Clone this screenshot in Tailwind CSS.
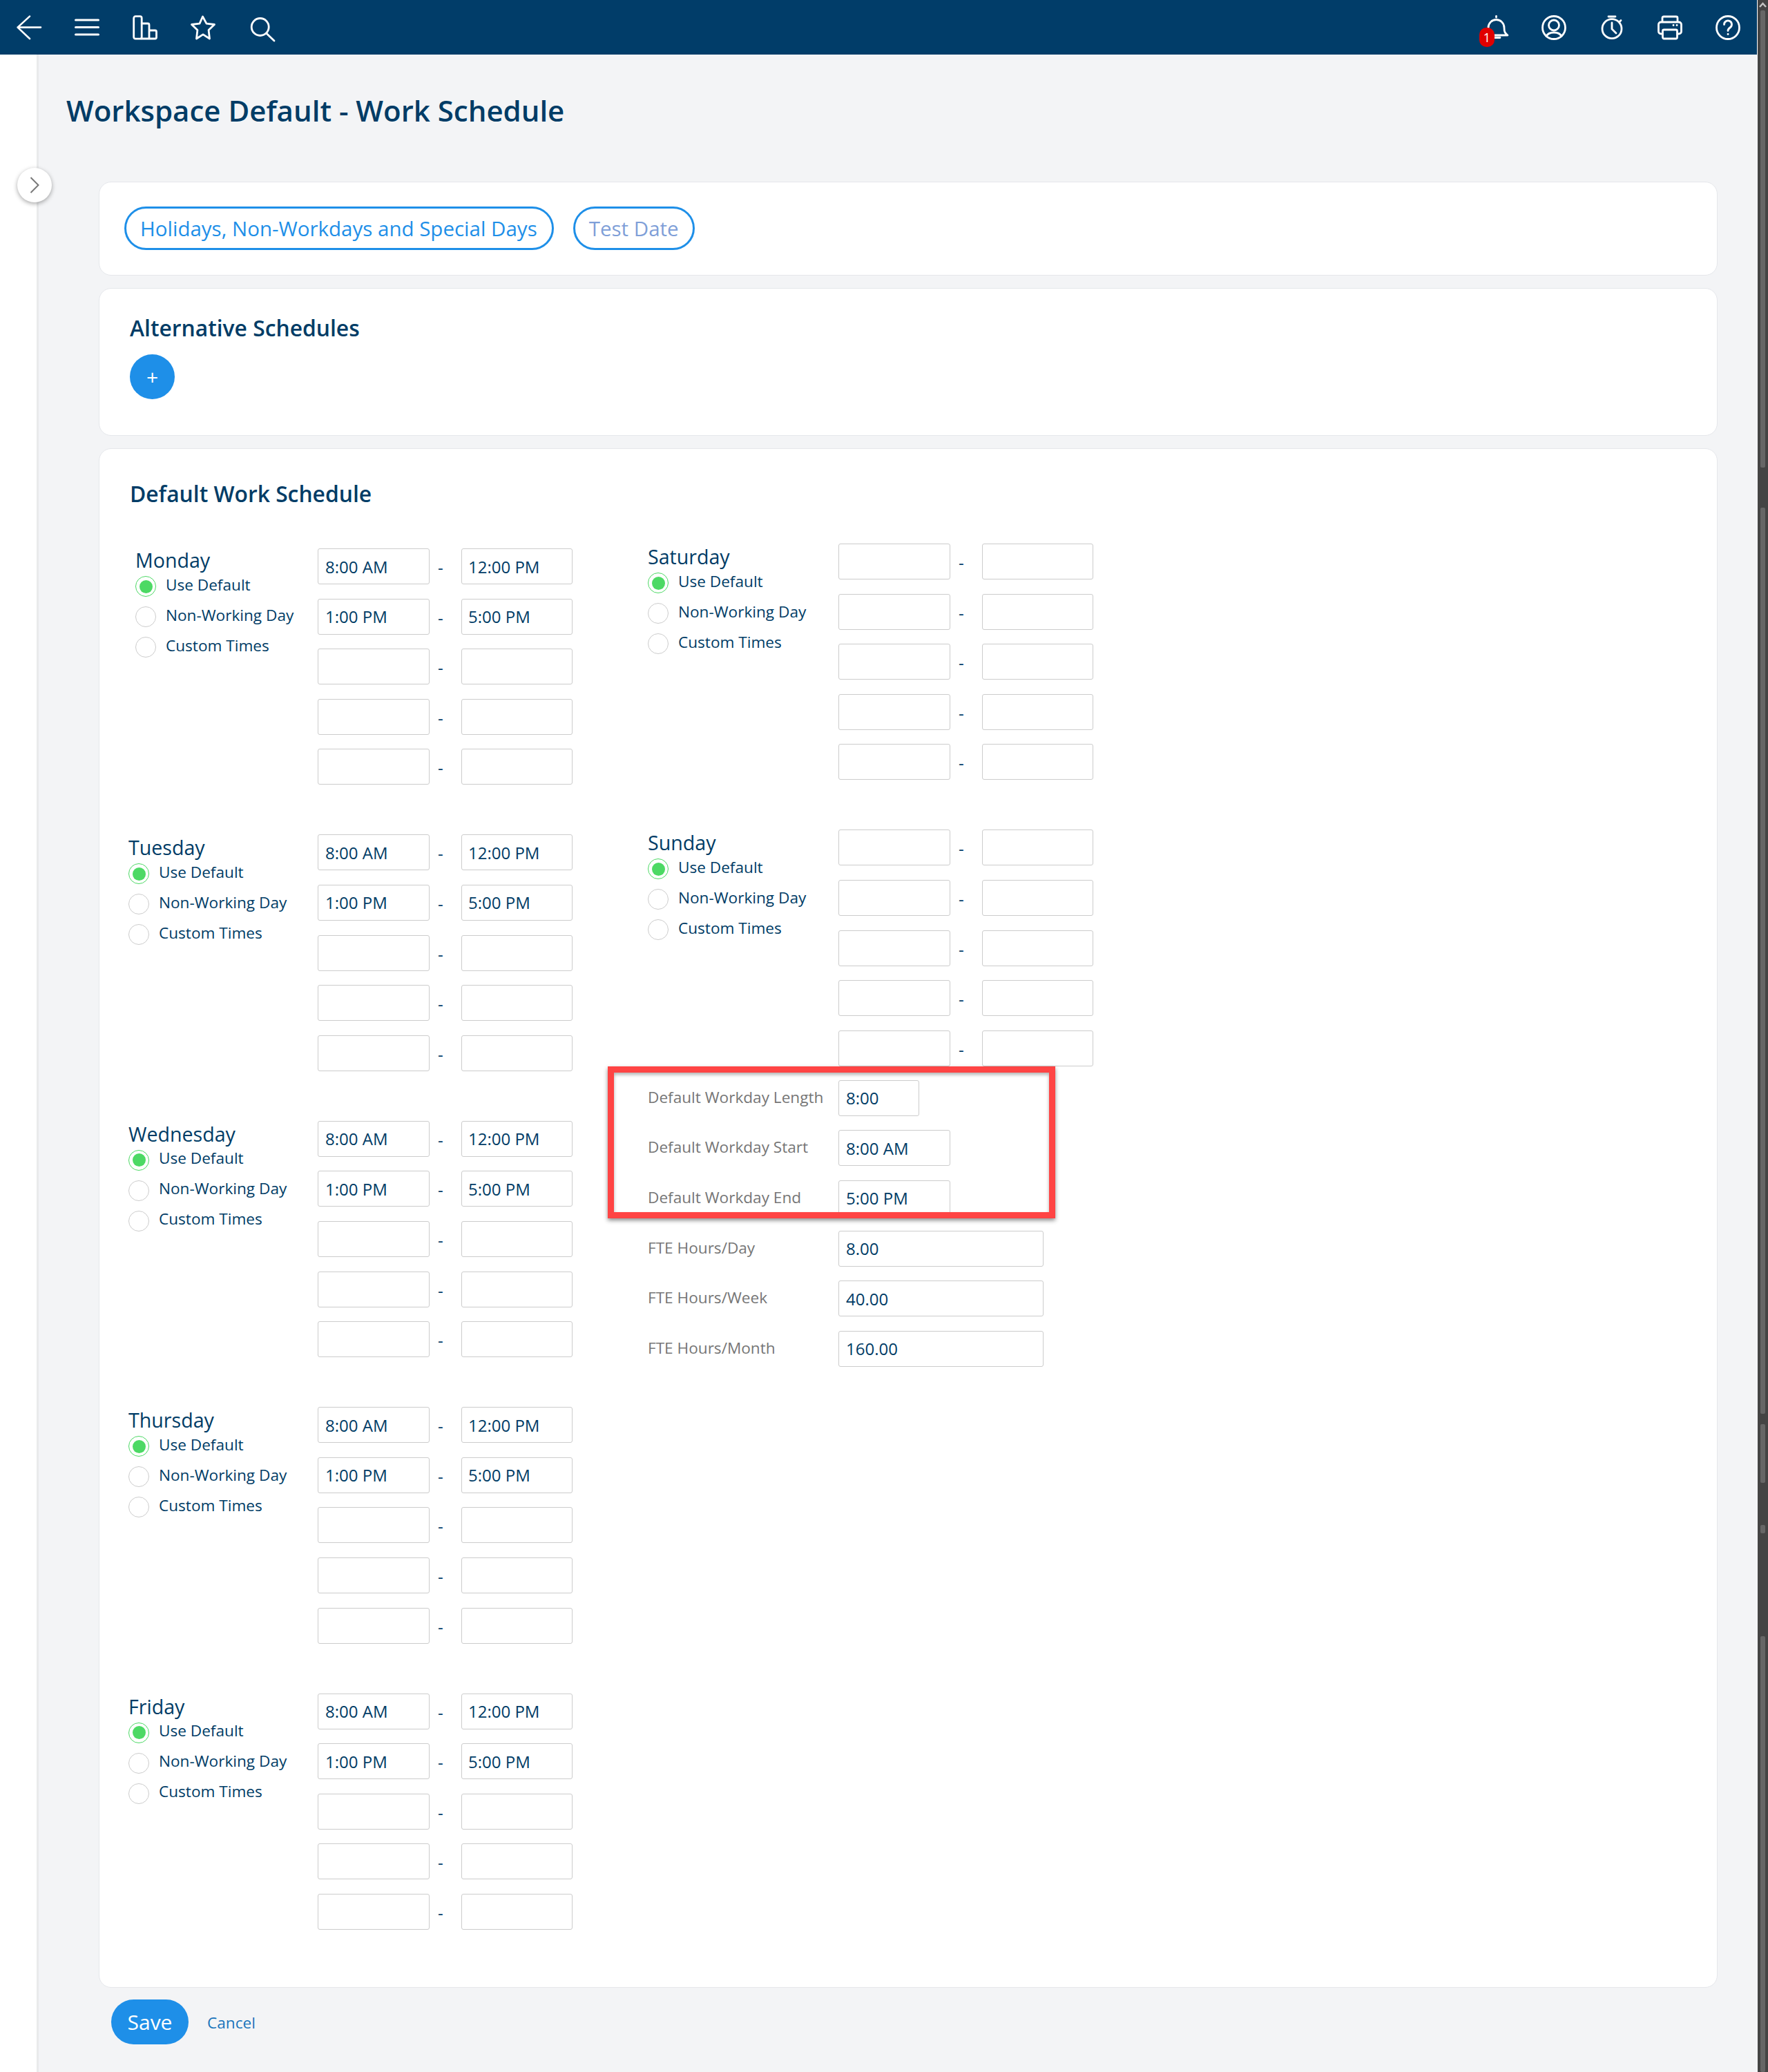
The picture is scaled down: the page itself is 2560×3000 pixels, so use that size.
<!DOCTYPE html>
<html lang="en">
<head>
  <meta charset="UTF-8" />
  <meta name="viewport" content="width=device-width, initial-scale=1.0" />
  <title>Workspace Default - Work Schedule</title>
  <script src="https://cdn.jsdelivr.net/npm/@tailwindcss/browser@4"></script>
</head>
<body class="bg-white font-['Open_Sans',sans-serif] text-[#003c66]">
<div class="relative flex w-[2560px] h-[3000px] overflow-hidden">

  <!-- page -->
  <div class="w-[2545px] flex flex-col">
    <!-- top bar -->
    <header class="h-[79px] shrink-0 w-[2544px] bg-[#013d69] flex items-center justify-between pl-[24px] pr-[24px] text-white">
      <div class="flex items-center gap-[48px]">
        <svg class="w-9 h-9 overflow-visible" viewBox="0 0 36 36" fill="none" stroke="currentColor" stroke-width="2.6" stroke-linecap="round" stroke-linejoin="round"><path d="M19 1.6 1.6 17.6 19 34M1.6 17.6H35"/></svg>
        <svg class="w-9 h-9 overflow-visible" viewBox="0 0 36 36" fill="none" stroke="currentColor" stroke-width="3" stroke-linecap="round"><path d="M1.5 7h33M1.5 17.6h33M1.5 28h33"/></svg>
        <svg class="w-9 h-9 overflow-visible" viewBox="0 0 36 36" fill="none" stroke="currentColor" stroke-width="2.8" stroke-linecap="round" stroke-linejoin="round"><rect x="1.7" y="1.7" width="11.5" height="32.5" rx="2.5"/><path d="M13.2 12H22a2 2 0 0 1 2 2v20M24 22h8.5a2 2 0 0 1 2 2v8a2 2 0 0 1-2 2H13"/></svg>
        <svg class="w-9 h-9 overflow-visible" viewBox="0 0 36 36" fill="none" stroke="currentColor" stroke-width="2.8" stroke-linejoin="round"><path d="M17.5 2 23 12.1 34.5 13.5 26.1 21.6 27.5 34 18 27.8 8.5 34 9.9 21.6 1.5 13.5 13 12.1Z"/></svg>
        <svg class="w-9 h-9 overflow-visible ml-[2px]" viewBox="0 0 36 36" fill="none" stroke="currentColor" stroke-width="2.8" stroke-linecap="round"><circle cx="14.7" cy="17" r="12.5"/><path d="M24 26.5 35 37"/></svg>
      </div>
      <div class="flex items-center gap-[48px]">
        <div class="relative w-9 h-9">
          <svg class="w-9 h-9 overflow-visible" viewBox="0 0 36 36" fill="none" stroke="currentColor" stroke-width="2.8" stroke-linecap="round" stroke-linejoin="round"><path d="M18.5 1.500v1.500M6 29c2-2 1-5 1-11a11.500 11.500 0 0 1 23 0c0 6 1 8 5 11ZM15 32.500h9"/></svg>
          <span class="absolute left-[-6px] top-[18px] w-[22px] h-[28px] rounded-[10px] bg-[#e00000] text-white text-[18px] leading-[28px] text-center">1</span>
        </div>
        <svg class="w-9 h-9" viewBox="0 0 36 36" fill="none" stroke="currentColor" stroke-width="2.8" stroke-linecap="round"><circle cx="18" cy="18" r="16.5"/><circle cx="18" cy="14.5" r="7.5"/><path d="M7 30.5c2-4 6-5.5 11-5.5s9 1.5 11 5.5"/></svg>
        <svg class="w-9 h-9 overflow-visible" viewBox="0 0 36 36" fill="none" stroke="currentColor" stroke-width="2.8" stroke-linecap="round"><circle cx="18" cy="19.7" r="14"/><path d="M13 2h10M18 11v9l6 6M29 9.5l2-2"/></svg>
        <svg class="w-9 h-9" viewBox="0 0 36 36" fill="none" stroke="currentColor" stroke-width="2.8" stroke-linecap="round" stroke-linejoin="round"><path d="M7 10V4a2 2 0 0 1 2-2h18a2 2 0 0 1 2 2v6M7 27H5a3.5 3.5 0 0 1-3.5-3.5v-10A3.5 3.5 0 0 1 5 10h26a3.5 3.5 0 0 1 3.5 3.5v10A3.5 3.5 0 0 1 31 27h-2"/><rect x="7.5" y="21" width="21" height="13" rx="2"/><path d="M23 14.500h.1M28 14.500h.1"/></svg>
        <svg class="w-9 h-9" viewBox="0 0 36 36" fill="none" stroke="currentColor" stroke-width="2.8" stroke-linecap="round"><circle cx="18" cy="18" r="16.500"/><path d="M12.500 13.500a5.500 5.500 0 1 1 8.500 4.500c-2 1.400-3 2.400-3 4.500M18 27.500h.1"/></svg>
      </div>
    </header>

    <div class="flex flex-1">
      <!-- collapsed side rail -->
      <aside class="w-[56px] shrink-0 bg-white border-r-[3px] border-[#e9eaeb]"></aside>

      <main class="flex-1 bg-[#f3f4f6]">
        <h1 class="pl-[40px] pt-[51px] h-[184px] text-[42px] leading-[60px] font-semibold">Workspace Default - Work Schedule</h1>

        <div class="ml-[87px] w-[2344px] flex flex-col gap-[18px]">
          <!-- links -->
          <section class="h-[136px] bg-white border border-[#e5e7eb] rounded-[18px] pl-[36px] pt-[35px] flex items-start gap-[28px]">
            <a class="h-[63px] pl-[20px] pr-[21px] pt-[1px] flex items-center rounded-full border-[3px] border-[#1e8fe8] text-[#1e8fe8] text-[29.500px]">Holidays, Non-Workdays and Special Days</a>
            <a class="h-[63px] pl-[20px] pr-[20px] pt-[1px] flex items-center rounded-full border-[3px] border-[#1e8fe8] text-[#7f9fd8] text-[29.500px]">Test Date</a>
          </section>

          <!-- alternative schedules -->
          <section class="h-[214px] bg-white border border-[#e5e7eb] rounded-[18px] pl-[44px] pt-[35px]">
            <h2 class="text-[31.800px] leading-[44px] font-semibold">Alternative Schedules</h2>
            <button class="mt-[16px] w-[65px] h-[65px] rounded-full bg-[#1e8fe8] text-white text-[30px] leading-none">+</button>
          </section>

          <!-- default schedule -->
          <section class="h-[2229px] bg-white border border-[#e5e7eb] rounded-[18px] pl-[42px] pt-[43px]">
            <h2 class="ml-[2px] text-[31.800px] leading-[44px] font-semibold">Default Work Schedule</h2>
            <div class="mt-[57px] flex items-start gap-[109px]">
              <div id="weekdays" class="flex flex-col gap-[72px]"></div>
              <div id="weekend" class="-mt-[7px] flex flex-col">
                <div id="weekend-days" class="flex flex-col gap-[72px]"></div>
                <div id="defaults" class="mt-[20px] flex flex-col gap-[20.600px]"></div>
              </div>
            </div>
          </section>
        </div>

        <div class="ml-[105px] mt-[17px] flex items-center gap-[27px]">
          <button class="w-[112px] h-[65px] rounded-full bg-[#1e8fe8] text-white text-[30px]">Save</button>
          <a class="mt-[2px] text-[22.600px] text-[#1a75bb]">Cancel</a>
        </div>
      </main>
    </div>
  </div>

  <!-- browser scrollbar -->
  <div class="w-[15px] h-full bg-[#444444] relative">
    <svg class="absolute left-[2px] top-[3px] w-[11px] h-[8px]" viewBox="0 0 11 8" fill="none" stroke="#c4c4c4" stroke-width="2.500"><path d="M1 7 5.500 2 10 7"/></svg>
    <div class="flex flex-col items-center">
      <div class="mt-[15px] w-[7px] h-[662px] bg-[#666666] rounded-[2px]"></div>
      <div class="mt-[58px] w-[7px] h-[1312px] bg-[#666666] rounded-[2px]"></div>
      <div class="mt-[15px] w-[7px] h-[85px] bg-[#666666] rounded-[2px]"></div>
      <div class="mt-[61px] w-[7px] h-[12px] bg-[#666666] rounded-[2px]"></div>
      <div class="mt-[149px] w-[7px] h-[631px] bg-[#666666] rounded-[2px]"></div>
    </div>
  </div>

  <!-- sidebar toggle -->
  <button class="absolute left-[25px] top-[243px] w-[50px] h-[50px] rounded-full bg-white shadow-[0_2px_6px_rgba(0,0,0,0.35)] flex items-center justify-center">
    <svg class="w-[14px] h-[24px]" viewBox="0 0 14 24" fill="none" stroke="#777777" stroke-width="2"><path d="M1.500 1 12.500 12 1.500 23"/></svg>
  </button>

  <!-- red annotation box -->
  <div class="absolute left-[880px] top-[1544px] w-[648px] h-[220px] border-[9px] border-[#ff4444] shadow-[0_3px_6px_rgba(0,0,0,0.45),inset_0_3px_5px_rgba(0,0,0,0.3)] pointer-events-none"></div>
</div>

<script>
  const startCls = "w-[162px] h-[52px] border border-[#cccccc] rounded-[3px] bg-white pl-[10px] text-[24px] text-[#003c66] outline-none";
  const endCls = "w-[161px] h-[52px] border border-[#cccccc] rounded-[3px] bg-white pl-[9px] text-[24px] text-[#003c66] outline-none";

  function timeRows(times) {
    let html = "";
    for (let i = 0; i < 5; i++) {
      const t = times[i] || ["", ""];
      html += `<div class="flex items-center">
        <input class="${startCls}" value="${t[0]}">
        <span class="w-[46px] pl-[12px] pt-[4px] text-[24px] leading-none font-medium">-</span>
        <input class="${endCls}" value="${t[1]}">
      </div>`;
    }
    return html;
  }

  function radio(label, checked) {
    const mark = checked
      ? `<span class="w-[30px] h-[30px] rounded-full border border-[#4cd964] flex items-center justify-center shrink-0"><span class="w-[19px] h-[19px] rounded-full bg-[#4cd964]"></span></span>`
      : `<span class="w-[30px] h-[30px] rounded-full border border-[#cccccc] shrink-0"></span>`;
    return `<label class="flex items-center gap-[14px] h-[44px] text-[22.600px] leading-none">${mark}<span class="-mt-[4px]">${label}</span></label>`;
  }

  function day(name, times, labelWidth, extra) {
    return `<div class="flex items-start">
      <div class="${labelWidth} ${extra}">
        <div class="text-[28.600px] leading-[38px] mb-[-3px]">${name}</div>
        ${radio("Use Default", true)}${radio("Non-Working Day")}${radio("Custom Times")}
      </div>
      <div class="flex flex-col gap-[20.600px]">${timeRows(times)}</div>
    </div>`;
  }

  const std = [["8:00 AM", "12:00 PM"], ["1:00 PM", "5:00 PM"]];
  document.getElementById("weekdays").innerHTML =
    day("Monday", std, "w-[274px]", "pl-[10px] -mt-[2px]") +
    ["Tuesday", "Wednesday", "Thursday", "Friday"].map(d => day(d, std, "w-[274px]", "")).join("");
  document.getElementById("weekend-days").innerHTML =
    ["Saturday", "Sunday"].map(d => day(d, [], "w-[276px]", "")).join("");

  const defaults = [
    ["Default Workday Length", "8:00", "w-[117px]"],
    ["Default Workday Start", "8:00 AM", "w-[162px]"],
    ["Default Workday End", "5:00 PM", "w-[162px]"],
    ["FTE Hours/Day", "8.00", "w-[297px]"],
    ["FTE Hours/Week", "40.00", "w-[297px]"],
    ["FTE Hours/Month", "160.00", "w-[297px]"],
  ];
  document.getElementById("defaults").innerHTML = defaults.map(r => `<div class="flex items-center">
    <span class="w-[276px] -mt-[2px] text-[22.600px] text-[#767676]">${r[0]}</span>
    <input class="${r[2]} h-[52px] border border-[#cccccc] rounded-[3px] bg-white pl-[10px] text-[24px] text-[#003c66] outline-none" value="${r[1]}">
  </div>`).join("");
</script>
</body>
</html>
